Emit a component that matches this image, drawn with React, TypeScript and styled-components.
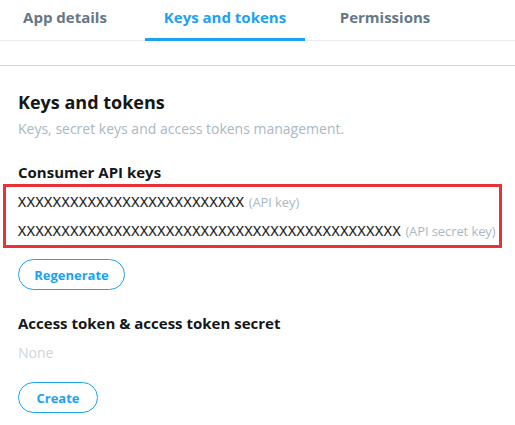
import * as React from "react";
import styled, { createGlobalStyle } from "styled-components";

const GlobalStyle = createGlobalStyle`
  body {
    margin: 0;
    background: #ffffff;
    font-family: "Open Sans", "Noto Sans", sans-serif;
    color: #14171a;
  }
`;

const SPage = styled.div`
  width: 515px;
  overflow: hidden;
`;

const STabs = styled.div`
  display: flex;
  height: 40px;
  margin-left: -15px;
  border-bottom: 1px solid #e6ecf0;
`;

interface ITabStyle {
  active?: boolean;
}

const STab = styled.div<ITabStyle>`
  width: 160px;
  display: flex;
  align-items: center;
  justify-content: center;
  box-sizing: border-box;
  padding-bottom: 4px;
  font-size: 15px;
  font-weight: 700;
  color: ${({ active }) => (active ? "#1da1f2" : "#657786")};
  border-bottom: 3px solid ${({ active }) => (active ? "#1da1f2" : "transparent")};
  margin-bottom: -1px;
`;

const SPanel = styled.div`
  margin-top: 24px;
  border-top: 1px solid #ccd6dd;
  padding: 24px 18px 0;
`;

const STitle = styled.h2`
  margin: 0;
  font-size: 18px;
  line-height: 24px;
  font-weight: 700;
  color: #14171a;
`;

const SSubtitle = styled.p`
  margin: 5px 0 0;
  font-size: 14px;
  line-height: 20px;
  color: #aab8c2;
`;

const SSectionTitle = styled.h3<{ gap: number }>`
  margin: ${({ gap }) => gap}px 0 0;
  font-size: 15px;
  line-height: 20px;
  font-weight: 700;
  color: #14171a;
`;

const SKeyBox = styled.div`
  margin: 2px -5px 0 -15px;
  border: 3px solid #e8323a;
  padding: 0 12px;
  overflow: hidden;
`;

const SKeyRow = styled.div`
  height: 29px;
  font-size: 14px;
  line-height: 29px;
  color: #0f1114;
  white-space: nowrap;
  letter-spacing: 0.62px;
  -webkit-text-stroke: 0.2px #0f1114;
`;

const SHint = styled.span`
  color: #aab8c2;
  font-size: 13px;
  line-height: 1;
  letter-spacing: -0.1px;
  -webkit-text-stroke: 0;
`;

const SMuted = styled.p`
  margin: 10px 0 0;
  font-size: 14px;
  line-height: 20px;
  color: #ccd6dd;
`;

const SButton = styled.button<{ gap: number; width: number }>`
  display: block;
  margin-top: ${({ gap }) => gap}px;
  width: ${({ width }) => width}px;
  height: 31px;
  border: 1px solid #1da1f2;
  border-radius: 999px;
  background: #ffffff;
  color: #1da1f2;
  font-family: inherit;
  font-size: 13px;
  font-weight: 700;
  padding: 0;
`;

const App = () => {
  return (
    <SPage>
      <GlobalStyle />
      <STabs>
        <STab>App details</STab>
        <STab active>Keys and tokens</STab>
        <STab>Permissions</STab>
      </STabs>
      <SPanel>
        <STitle>Keys and tokens</STitle>
        <SSubtitle>Keys, secret keys and access tokens management.</SSubtitle>
        <SSectionTitle gap={23}>Consumer API keys</SSectionTitle>
        <SKeyBox>
          <SKeyRow>
            {"X".repeat(26)} <SHint>(API key)</SHint>
          </SKeyRow>
          <SKeyRow>
            {"X".repeat(44)} <SHint>(API secret key)</SHint>
          </SKeyRow>
        </SKeyBox>
        <SButton gap={11} width={107}>
          Regenerate
        </SButton>
        <SSectionTitle gap={23}>Access token &amp; access token secret</SSectionTitle>
        <SMuted>None</SMuted>
        <SButton gap={19} width={80}>
          Create
        </SButton>
      </SPanel>
    </SPage>
  );
};

export default App;
